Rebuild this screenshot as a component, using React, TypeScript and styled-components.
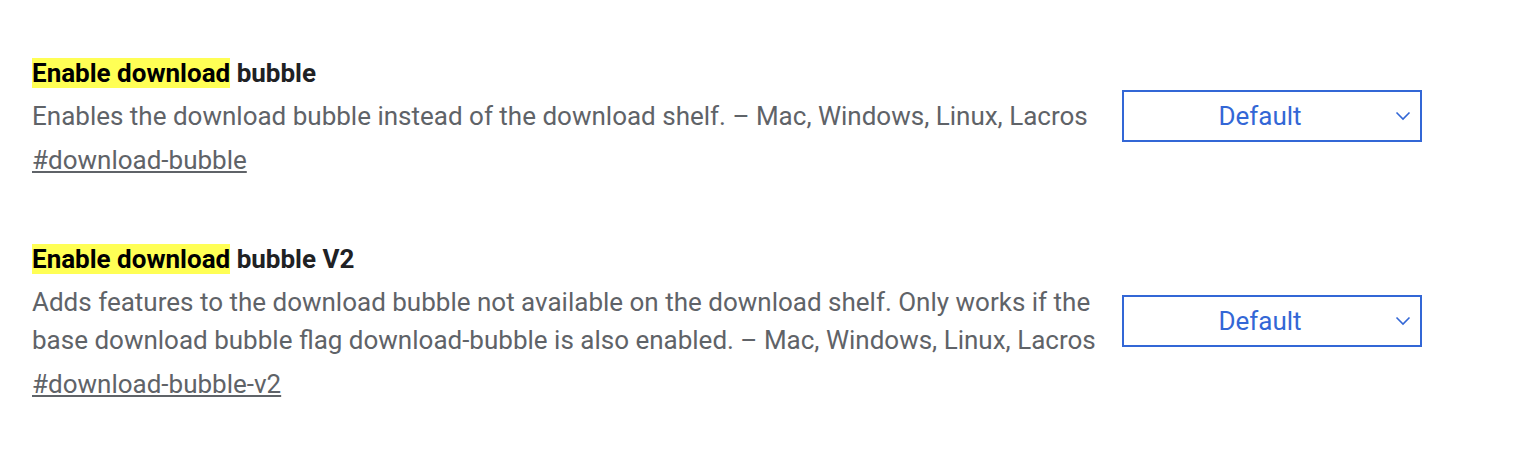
import React from "react";
import styled, { createGlobalStyle } from "styled-components";

const Global = createGlobalStyle`
  html, body { margin: 0; padding: 0; background: #ffffff; }
  body { font-family: Roboto, "Liberation Sans", sans-serif; }
`;

const Page = styled.div`
  display: flex;
  flex-direction: column;
  gap: 63px;
  padding: 56px 0 0 32px;
`;

const Row = styled.div`
  display: flex;
  align-items: center;
  gap: 22px;
`;

const Info = styled.div`
  width: 1068px;
  display: flex;
  flex-direction: column;
`;

const Title = styled.div`
  font-size: 26px;
  font-weight: 700;
  color: #202124;
  line-height: 34px;
`;

const Mark = styled.mark`
  background: #ffff55;
  color: #000;
`;

const Desc = styled.div`
  font-size: 26px;
  color: #5f6368;
  line-height: 38px;
  margin-top: 7px;
`;

const Link = styled.a`
  font-size: 26px;
  color: #5f6368;
  line-height: 38px;
  text-decoration: underline;
  align-self: flex-start;
  margin-top: 6px;
`;

const Select = styled.div`
  position: relative;
  width: 300px;
  height: 52px;
  margin-top: -3px;
  box-sizing: border-box;
  border: 2px solid #3367d6;
  padding-right: 24px;
  display: flex;
  align-items: center;
  justify-content: center;
  color: #3367d6;
  font-size: 26px;
`;

const Chevron = styled.svg`
  position: absolute;
  right: 9px;
  top: 50%;
  transform: translateY(-50%);
`;

const flags = [
  {
    name: "bubble",
    desc: "Enables the download bubble instead of the download shelf. – Mac, Windows, Linux, Lacros",
    link: "#download-bubble",
  },
  {
    name: "bubble V2",
    desc: "Adds features to the download bubble not available on the download shelf. Only works if the base download bubble flag download-bubble is also enabled. – Mac, Windows, Linux, Lacros",
    link: "#download-bubble-v2",
  },
];

export default function App() {
  return (
    <>
      <Global />
      <Page>
        {flags.map((f) => (
          <Row key={f.link}>
            <Info>
              <Title>
                <Mark>Enable download</Mark> {f.name}
              </Title>
              <Desc>{f.desc}</Desc>
              <Link href={f.link}>{f.link}</Link>
            </Info>
            <Select>
              Default
              <Chevron width="16" height="10" viewBox="0 0 16 10">
                <path d="M1.5 1.5 L8 8 L14.5 1.5" fill="none" stroke="#3367d6" strokeWidth="1.6" />
              </Chevron>
            </Select>
          </Row>
        ))}
      </Page>
    </>
  );
}
